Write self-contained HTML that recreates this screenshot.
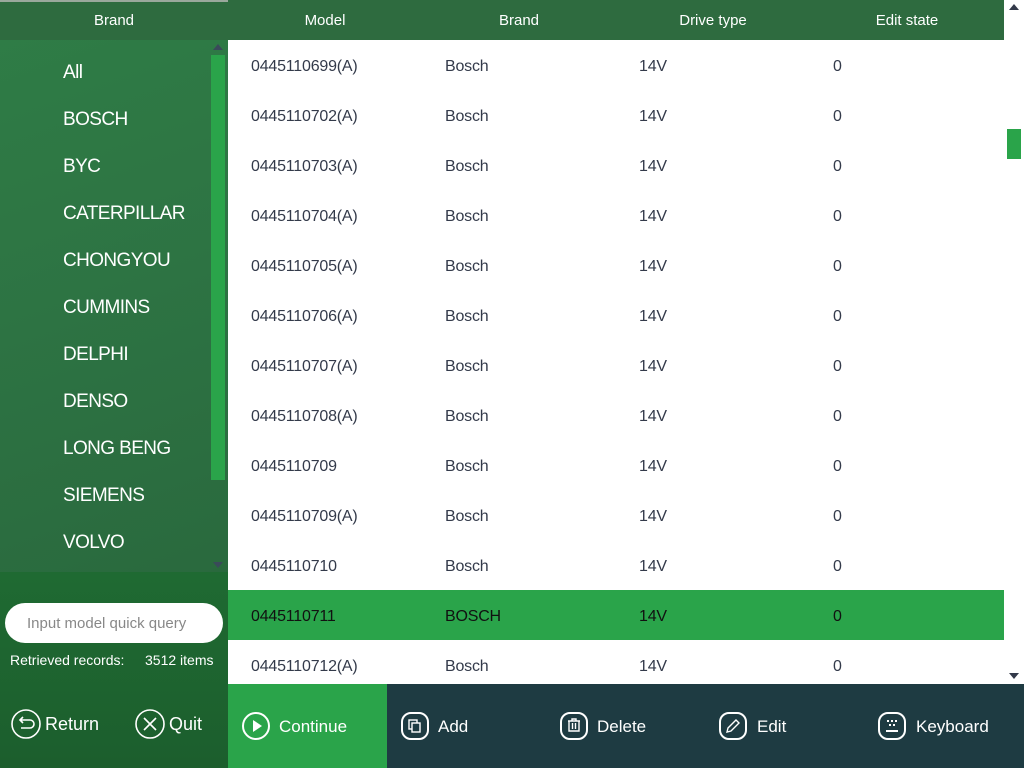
<!DOCTYPE html>
<html><head><meta charset="utf-8"><style>
*{margin:0;padding:0;box-sizing:border-box}
body{width:1024px;height:768px;overflow:hidden;position:relative;font-family:"Liberation Sans",sans-serif;background:#fff}
.abs{position:absolute}
.left{left:0;top:0;width:228px;height:768px;background:linear-gradient(160deg,#2f7d46 0%,#2d7343 40%,#2a6a3e 75%,#1f5a30 100%)}
.hdr{top:0;height:40px;background:#2e6b3f;color:#fff;font-size:15px;line-height:42px;text-align:center}
.brand{left:63px;color:#fff;font-size:19px;letter-spacing:-0.6px}
.row{left:228px;width:776px;height:50px;font-size:16px;color:#333a4a;line-height:53px;letter-spacing:-0.2px}
.row span{position:absolute}
.sel{background:#2aa44a;color:#111}
.btn{color:#fff;font-size:18px;line-height:86px;top:684px;height:84px}
.ic{display:inline-block;vertical-align:middle;position:absolute}
</style></head><body>
<div class="abs left"></div>
<div class="abs" style="left:0;top:572px;width:228px;height:196px;background:linear-gradient(180deg,#1f6a32,#1c5e2d)"></div>
<div class="abs hdr" style="left:0;width:1004px"></div>
<div class="abs hdr" style="left:0;width:228px">Brand</div>
<div class="abs hdr" style="left:228px;width:194px">Model</div>
<div class="abs hdr" style="left:422px;width:194px">Brand</div>
<div class="abs hdr" style="left:616px;width:194px">Drive type</div>
<div class="abs hdr" style="left:810px;width:194px">Edit state</div>
<div class="abs" style="left:0;top:0;width:228px;height:2px;background:#9aa89c"></div>

<div class="abs" style="left:211px;top:55px;width:14px;height:425px;background:#2aa44a"></div>
<div class="abs" style="left:213px;top:44px;width:0;height:0;border-left:5px solid transparent;border-right:5px solid transparent;border-bottom:6px solid #3a4a5a"></div>
<div class="abs" style="left:213px;top:562px;width:0;height:0;border-left:5px solid transparent;border-right:5px solid transparent;border-top:6px solid #3a4a5a"></div>

<div class="abs brand" style="top:62px">All</div>
<div class="abs brand" style="top:109px">BOSCH</div>
<div class="abs brand" style="top:156px">BYC</div>
<div class="abs brand" style="top:203px">CATERPILLAR</div>
<div class="abs brand" style="top:250px">CHONGYOU</div>
<div class="abs brand" style="top:297px">CUMMINS</div>
<div class="abs brand" style="top:344px">DELPHI</div>
<div class="abs brand" style="top:391px">DENSO</div>
<div class="abs brand" style="top:438px">LONG BENG</div>
<div class="abs brand" style="top:485px">SIEMENS</div>
<div class="abs brand" style="top:532px">VOLVO</div>

<div class="abs" style="left:5px;top:603px;width:218px;height:40px;background:#fff;border-radius:20px;color:#888;font-size:15px;line-height:42px;padding-left:22px">Input model quick query</div>
<div class="abs" style="left:10px;top:652px;color:#fff;font-size:14px">Retrieved records:</div>
<div class="abs" style="left:145px;top:652px;color:#fff;font-size:14px">3512 items</div>

<div class="abs btn" style="left:0;width:228px;line-height:80px">
<svg class="ic" style="left:10px;top:24px" width="32" height="32" viewBox="0 0 32 32"><circle cx="16" cy="16" r="14" fill="none" stroke="#fff" stroke-width="1.6"/><path d="M11 12h9a4 4 0 0 1 0 8h-9M13 9l-3 3 3 3" fill="none" stroke="#fff" stroke-width="1.6"/></svg>
<span class="abs" style="left:45px">Return</span>
<svg class="ic" style="left:134px;top:24px" width="32" height="32" viewBox="0 0 32 32"><circle cx="16" cy="16" r="14" fill="none" stroke="#fff" stroke-width="1.6"/><path d="M10 10l12 12M22 10l-12 12" stroke="#fff" stroke-width="1.6"/></svg>
<span class="abs" style="left:169px">Quit</span>
</div>

<div class="abs row" style="top:40px"><span style="left:23px">0445110699(A)</span><span style="left:217px">Bosch</span><span style="left:411px">14V</span><span style="left:605px">0</span></div>
<div class="abs row" style="top:90px"><span style="left:23px">0445110702(A)</span><span style="left:217px">Bosch</span><span style="left:411px">14V</span><span style="left:605px">0</span></div>
<div class="abs row" style="top:140px"><span style="left:23px">0445110703(A)</span><span style="left:217px">Bosch</span><span style="left:411px">14V</span><span style="left:605px">0</span></div>
<div class="abs row" style="top:190px"><span style="left:23px">0445110704(A)</span><span style="left:217px">Bosch</span><span style="left:411px">14V</span><span style="left:605px">0</span></div>
<div class="abs row" style="top:240px"><span style="left:23px">0445110705(A)</span><span style="left:217px">Bosch</span><span style="left:411px">14V</span><span style="left:605px">0</span></div>
<div class="abs row" style="top:290px"><span style="left:23px">0445110706(A)</span><span style="left:217px">Bosch</span><span style="left:411px">14V</span><span style="left:605px">0</span></div>
<div class="abs row" style="top:340px"><span style="left:23px">0445110707(A)</span><span style="left:217px">Bosch</span><span style="left:411px">14V</span><span style="left:605px">0</span></div>
<div class="abs row" style="top:390px"><span style="left:23px">0445110708(A)</span><span style="left:217px">Bosch</span><span style="left:411px">14V</span><span style="left:605px">0</span></div>
<div class="abs row" style="top:440px"><span style="left:23px">0445110709</span><span style="left:217px">Bosch</span><span style="left:411px">14V</span><span style="left:605px">0</span></div>
<div class="abs row" style="top:490px"><span style="left:23px">0445110709(A)</span><span style="left:217px">Bosch</span><span style="left:411px">14V</span><span style="left:605px">0</span></div>
<div class="abs row" style="top:540px"><span style="left:23px">0445110710</span><span style="left:217px">Bosch</span><span style="left:411px">14V</span><span style="left:605px">0</span></div>
<div class="abs row sel" style="top:590px"><span style="left:23px">0445110711</span><span style="left:217px">BOSCH</span><span style="left:411px">14V</span><span style="left:605px">0</span></div>
<div class="abs row" style="top:640px;height:44px;overflow:hidden"><span style="left:23px;top:0">0445110712(A)</span><span style="left:217px">Bosch</span><span style="left:411px">14V</span><span style="left:605px">0</span></div>

<div class="abs" style="left:1009px;top:4px;width:0;height:0;border-left:5px solid transparent;border-right:5px solid transparent;border-bottom:6px solid #333a4a"></div>
<div class="abs" style="left:1007px;top:129px;width:14px;height:30px;background:#2aa44a"></div>
<div class="abs" style="left:1009px;top:673px;width:0;height:0;border-left:5px solid transparent;border-right:5px solid transparent;border-top:6px solid #333a4a"></div>

<div class="abs btn" style="left:228px;width:159px;background:#2aa44a">
<svg class="ic" style="left:13px;top:27px" width="30" height="30" viewBox="0 0 30 30"><circle cx="15" cy="15" r="13" fill="none" stroke="#fff" stroke-width="2"/><path d="M12 9v12l9-6z" fill="#fff"/></svg>
<span class="abs" style="left:51px;font-size:17px">Continue</span>
</div>
<div class="abs btn" style="left:387px;width:637px;background:#1e3b42;font-size:17px">
<svg class="ic" style="left:13px;top:27px" width="30" height="30" viewBox="0 0 30 30"><rect x="2" y="2" width="26" height="26" rx="9" fill="none" stroke="#fff" stroke-width="2"/><rect x="9" y="9" width="8" height="9" fill="none" stroke="#fff" stroke-width="1.4"/><rect x="12" y="12" width="8" height="9" fill="#1e3b42" stroke="#fff" stroke-width="1.4"/></svg>
<span class="abs" style="left:51px">Add</span>
<svg class="ic" style="left:172px;top:27px" width="30" height="30" viewBox="0 0 30 30"><rect x="2" y="2" width="26" height="26" rx="9" fill="none" stroke="#fff" stroke-width="2"/><path d="M9 10h12M13 10V8h4v2M10 10v10h10V10M13.5 12v6M16.5 12v6" fill="none" stroke="#fff" stroke-width="1.4"/></svg>
<span class="abs" style="left:210px">Delete</span>
<svg class="ic" style="left:331px;top:27px" width="30" height="30" viewBox="0 0 30 30"><rect x="2" y="2" width="26" height="26" rx="9" fill="none" stroke="#fff" stroke-width="2"/><path d="M9 21l1-4 8-8 3 3-8 8z" fill="none" stroke="#fff" stroke-width="1.4"/></svg>
<span class="abs" style="left:370px">Edit</span>
<svg class="ic" style="left:490px;top:27px" width="30" height="30" viewBox="0 0 30 30"><rect x="2" y="2" width="26" height="26" rx="9" fill="none" stroke="#fff" stroke-width="2"/><path d="M11 9v2M15 9v2M19 9v2M13 13v2M17 13v2M9 20h12" stroke="#fff" stroke-width="2"/></svg>
<span class="abs" style="left:529px">Keyboard</span>
</div>
</body></html>
